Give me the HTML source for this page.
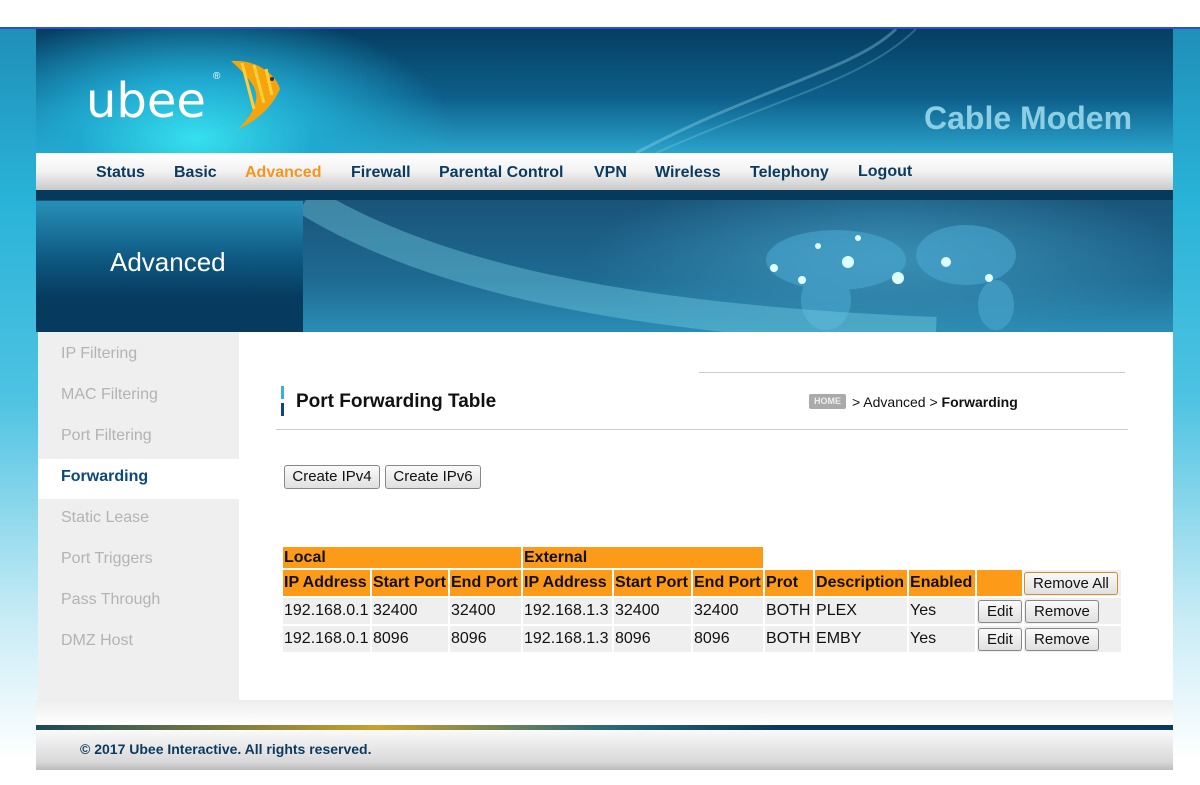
<!DOCTYPE html>
<html><head><meta charset="utf-8"><style>
*{margin:0;padding:0;box-sizing:border-box}
body{width:1200px;height:785px;overflow:hidden;position:relative;font-family:"Liberation Sans",Arial,sans-serif;background:linear-gradient(180deg,#fff 0,#fff 27px,#2a4fd0 27px,#2a4fd0 29px,#1f8fb8 29px,#29b3d8 200px,#4ec3e2 400px,#c9ecf6 620px,#fff 760px)}
.a{position:absolute}
#hdr{left:36px;top:29px;width:1137px;height:124px;background:radial-gradient(ellipse 260px 130px at 160px 110px,#36e0ee 0,#20a9d0 45%,rgba(10,70,110,0) 100%),linear-gradient(180deg,#063e62 0,#0d5f8a 55%,#2aa4cc 100%)}
#nav{left:36px;top:153px;width:1137px;height:37px;background:linear-gradient(180deg,#fff 0,#f2f2f2 50%,#c9c9c9 100%)}
#nav span{position:absolute;top:11px;font-weight:bold;font-size:16px;color:#0b3a5e}
#band{left:36px;top:190px;width:1137px;height:11px;background:#053a5c}
#ban{left:36px;top:200px;width:1137px;height:132px;background:radial-gradient(ellipse 300px 90px at 850px 60px,#3a8fb5 0,rgba(30,90,130,0) 100%),linear-gradient(180deg,#1a5479 0,#1e6a92 60%,#2a8db5 100%)}
#advbox{left:36px;top:201px;width:267px;height:131px;background:linear-gradient(180deg,#2790b8 0,#0e5881 45%,#063a5e 75%,#063a5e 100%);color:#fff;font-size:26px;padding:46px 0 0 74px}
#side{left:38px;top:332px;width:201px;height:368px;background:#efefef}
#main{left:239px;top:332px;width:934px;height:368px;background:#fff}
.si{position:absolute;left:23px;font-size:16px;color:#b3b3b3}
table{position:absolute;left:281px;top:545px;border-collapse:separate;border-spacing:2px;font-size:16px;table-layout:fixed;width:842px}
td{padding:0 1px;height:26px;white-space:nowrap;overflow:visible}
.o td{background:#fd9a17;font-weight:bold;color:#111}
.o.top td{height:21px}
.r td{background:#efefef;color:#111}
.btn{display:inline-block;border:1px solid #888;border-radius:3px;background:linear-gradient(#fafafa,#e0e0e0);font-size:15px;font-weight:normal;padding:2px 8px;color:#111}
</style></head><body>
<div class="a" id="hdr">
<svg class="a" style="left:600px;top:0" width="537" height="124"><path d="M0 124 C120 60 220 40 260 0" stroke="rgba(160,220,240,.35)" stroke-width="3" fill="none"/><path d="M20 124 C140 70 230 50 280 0" stroke="rgba(160,220,240,.25)" stroke-width="2" fill="none"/></svg>
<div class="a" style="left:50px;top:44px;font-size:48px;color:#fff;font-family:'DejaVu Sans',sans-serif">ubee</div>
<div class="a" style="left:177px;top:42px;font-size:10px;color:#fff">®</div>
<svg class="a" style="left:190px;top:30px" width="60" height="72"><path d="M5 2 C35 0 52 20 54 30 C45 50 30 62 12 70 C28 55 34 40 28 28 C22 18 14 10 5 2Z" fill="#f5a50b"/><path d="M16 4 L28 50 M28 6 L38 44 M40 10 L46 36" stroke="#ffcf3a" stroke-width="3"/><circle cx="46" cy="20" r="2" fill="#333"/></svg>
<div class="a" style="left:888px;top:71px;font-size:32px;font-weight:bold;color:#8ccfe4">Cable Modem</div>
</div>
<div class="a" id="nav">
<span style="left:60px">Status</span><span style="left:138px">Basic</span><span style="left:209px;color:#f7941d">Advanced</span><span style="left:315px">Firewall</span><span style="left:403px">Parental Control</span><span style="left:558px">VPN</span><span style="left:619px">Wireless</span><span style="left:714px">Telephony</span><span style="left:822px;top:10px">Logout</span>
</div>
<div class="a" id="band"></div>
<div class="a" id="ban">
<svg width="1137" height="132"><g fill="#4aa8d0" opacity=".6"><ellipse cx="800" cy="60" rx="70" ry="30"/><ellipse cx="930" cy="55" rx="50" ry="30"/><ellipse cx="790" cy="100" rx="25" ry="30"/><ellipse cx="960" cy="105" rx="18" ry="25"/></g><g fill="#dff"><circle cx="812" cy="62" r="6"/><circle cx="862" cy="78" r="6"/><circle cx="910" cy="62" r="5"/><circle cx="738" cy="68" r="4"/><circle cx="766" cy="80" r="4"/><circle cx="953" cy="78" r="4"/><circle cx="782" cy="46" r="3"/><circle cx="822" cy="38" r="3"/></g><path d="M270 0 C400 80 600 120 900 132" stroke="rgba(120,210,230,.4)" stroke-width="30" fill="none"/></svg>
</div>
<div class="a" id="advbox">Advanced</div>
<div class="a" id="side">
<div class="si" style="top:13px">IP Filtering</div><div class="si" style="top:54px">MAC Filtering</div><div class="si" style="top:95px">Port Filtering</div>
<div class="a" style="left:0;top:127px;width:201px;height:40px;background:#fff"></div>
<div class="si" style="top:136px;color:#0b4a75;font-weight:bold">Forwarding</div>
<div class="si" style="top:177px">Static Lease</div><div class="si" style="top:218px">Port Triggers</div><div class="si" style="top:259px">Pass Through</div><div class="si" style="top:300px">DMZ Host</div>
</div>
<div class="a" id="main"></div>
<div class="a" style="left:699px;top:372px;width:426px;height:1px;background:#ccc"></div>
<div class="a" style="left:276px;top:429px;width:852px;height:1px;background:#ccc"></div>
<div class="a" style="left:281px;top:386px;width:3px;height:13px;background:#3ab0dc"></div>
<div class="a" style="left:281px;top:403px;width:3px;height:13px;background:#0b4a75"></div>
<div class="a" style="left:296px;top:391px;font-size:19px;font-weight:bold;color:#111">Port Forwarding Table</div>
<div class="a" style="left:809px;top:394px;width:37px;height:15px;background:#aaa;border-radius:2px;color:#eee;font-size:9px;font-weight:bold;text-align:center;line-height:15px">HOME</div>
<div class="a" style="left:852px;top:394px;font-size:14px;color:#111">&gt; Advanced &gt; <b>Forwarding</b></div>
<div class="a" style="left:284px;top:465px;width:96px;height:24px;text-align:center;line-height:22px" ><span class="btn" style="display:block;padding:0">Create IPv4</span></div>
<div class="a" style="left:385px;top:465px;width:96px;height:24px;text-align:center;line-height:22px"><span class="btn" style="display:block;padding:0">Create IPv6</span></div>
<table>
<colgroup><col style="width:87px"><col style="width:76px"><col style="width:71px"><col style="width:89px"><col style="width:77px"><col style="width:70px"><col style="width:48px"><col style="width:92px"><col style="width:66px"><col style="width:45px"><col style="width:97px"></colgroup>
<tr class="o top"><td colspan="3">Local</td><td colspan="3">External</td><td colspan="5" style="background:none"></td></tr>
<tr class="o"><td>IP Address</td><td>Start Port</td><td>End Port</td><td>IP Address</td><td>Start Port</td><td>End Port</td><td>Prot</td><td>Description</td><td>Enabled</td><td></td><td style="background:#efefef;padding:0"><span class="btn" style="padding:2px 8px;border-color:#d09030">Remove All</span></td></tr>
<tr class="r"><td>192.168.0.1</td><td>32400</td><td>32400</td><td>192.168.1.3</td><td>32400</td><td>32400</td><td>BOTH</td><td>PLEX</td><td>Yes</td><td><span class="btn">Edit</span></td><td><span class="btn">Remove</span></td></tr>
<tr class="r"><td>192.168.0.1</td><td>8096</td><td>8096</td><td>192.168.1.3</td><td>8096</td><td>8096</td><td>BOTH</td><td>EMBY</td><td>Yes</td><td><span class="btn">Edit</span></td><td><span class="btn">Remove</span></td></tr>
</table>
<div class="a" style="left:36px;top:700px;width:1137px;height:25px;background:linear-gradient(#eee,#fff)"></div>
<div class="a" style="left:36px;top:725px;width:1137px;height:5px;background:linear-gradient(90deg,#1a4a5a,#c9a22a 30%,#2a6a7a 50%,#0b3a5e 65%,#0b3a5e)"></div>
<div class="a" style="left:36px;top:730px;width:1137px;height:40px;background:linear-gradient(#fafafa,#d8d8d8 80%,#bbb)"></div>
<div class="a" style="left:80px;top:741px;font-size:14px;font-weight:bold;color:#0b3a5e">© 2017 Ubee Interactive. All rights reserved.</div>
</body></html>
